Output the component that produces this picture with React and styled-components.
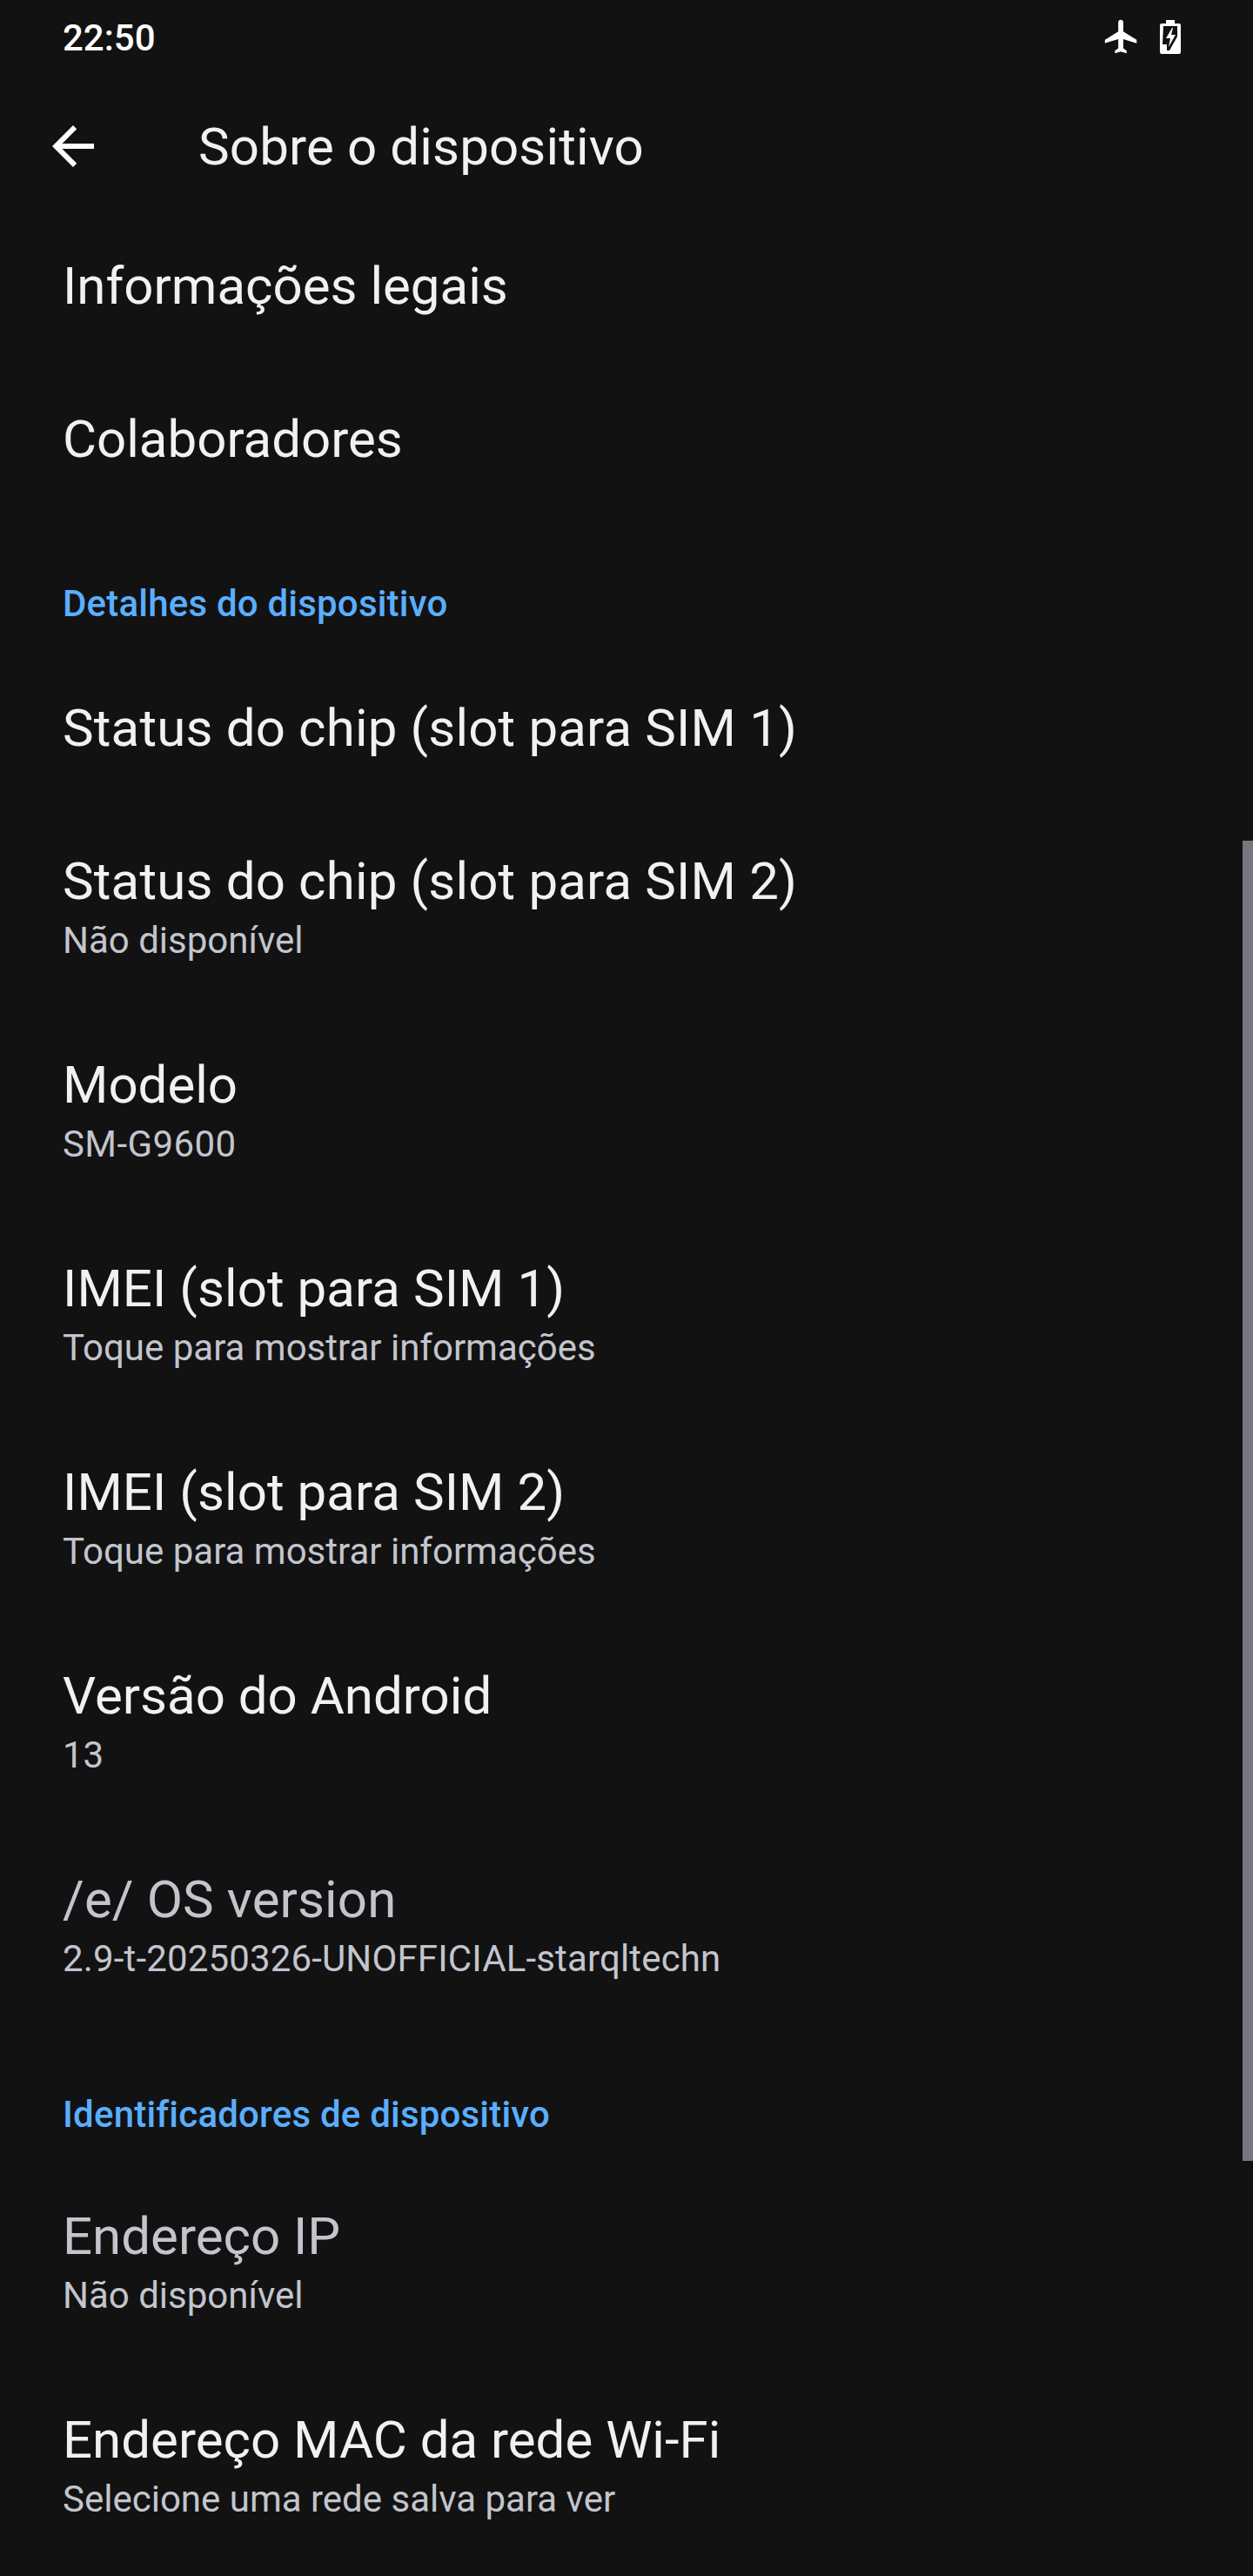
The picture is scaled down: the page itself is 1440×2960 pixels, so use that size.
import React from "react";
import styled, { createGlobalStyle } from "styled-components";

const GlobalStyle = createGlobalStyle`
  html, body {
    margin: 0;
    padding: 0;
    background: #121212;
  }
  body {
    font-family: Roboto, "Liberation Sans", sans-serif;
  }
`;

const sections = [
  {
    items: [{ title: "Informações legais" }, { title: "Colaboradores" }],
  },
  {
    header: "Detalhes do dispositivo",
    items: [
      { title: "Status do chip (slot para SIM 1)", track: 0.17 },
      { title: "Status do chip (slot para SIM 2)", track: 0.17, sub: "Não disponível" },
      { title: "Modelo", sub: "SM-G9600", subTrack: 0.4 },
      { title: "IMEI (slot para SIM 1)", track: 0.07, sub: "Toque para mostrar informações" },
      { title: "IMEI (slot para SIM 2)", track: 0.07, sub: "Toque para mostrar informações" },
      { title: "Versão do Android", sub: "13" },
      {
        title: "/e/ OS version",
        track: 0.12,
        sub: "2.9-t-20250326-UNOFFICIAL-starqltechn",
        subTrack: 0.15,
        muted: true,
      },
    ],
  },
  {
    header: "Identificadores de dispositivo",
    tight: true,
    items: [
      { title: "Endereço IP", sub: "Não disponível", muted: true },
      { title: "Endereço MAC da rede Wi-Fi", sub: "Selecione uma rede salva para ver" },
    ],
  },
];

function AirplaneIcon() {
  return (
    <svg width="46" height="46" viewBox="0 0 24 24" fill="#fff">
      <path d="M21 16v-2l-8-5V3.5c0-.83-.67-1.5-1.5-1.5S10 2.67 10 3.5V9l-8 5v2l8-2.5V19l-2 1.5V22l3.5-1 3.5 1v-1.5L13 19v-5.5l8 2.5z" />
    </svg>
  );
}

function BatteryIcon() {
  return (
    <svg width="24" height="39" viewBox="0 0 24 39">
      <path fill="#fff" d="M7 0h10v4h5a2 2 0 0 1 2 2v31a2 2 0 0 1-2 2H2a2 2 0 0 1-2-2V6a2 2 0 0 1 2-2h5z" />
      <path fill="#121212" d="M4 7h16v12l-9 16H8v-7H3z" />
      <path fill="#fff" d="M14 9 7 21h5l-2 10 8-14h-5l2-8z" />
    </svg>
  );
}

function ArrowBackIcon() {
  return (
    <svg width="72" height="72" viewBox="0 0 24 24" fill="#fff">
      <path d="M20 11H7.830l5.590-5.590L12 4l-8 8 8 8 1.410-1.410L7.830 13H20v-2z" />
    </svg>
  );
}

export default function App() {
  return (
    <>
      <GlobalStyle />
      <Screen>
        <StatusBar>
          <Clock>22:50</Clock>
          <StatusIcons>
            <AirplaneIcon />
            <BatteryIcon />
          </StatusIcons>
        </StatusBar>
        <Toolbar>
          <BackButton>
            <ArrowBackIcon />
          </BackButton>
          <ToolbarTitle>Sobre o dispositivo</ToolbarTitle>
        </Toolbar>
        <List>
          {sections.map((section, i) => (
            <Section key={i}>
              {section.header && <SectionHeader $tight={section.tight}>{section.header}</SectionHeader>}
              {section.items.map((item) => (
                <Row key={item.title}>
                  <RowTitle $muted={item.muted} $track={item.track}>
                    {item.title}
                  </RowTitle>
                  {item.sub && <RowSub $track={item.subTrack}>{item.sub}</RowSub>}
                </Row>
              ))}
            </Section>
          ))}
        </List>
        <ScrollThumb />
      </Screen>
    </>
  );
}

const Screen = styled.div`
  position: relative;
  width: 1440px;
  height: 2960px;
  overflow: hidden;
  background: #121212;
  color: #fff;
`;

const StatusBar = styled.div`
  height: 84px;
  padding: 0 83px 0 72px;
  display: flex;
  align-items: center;
  justify-content: space-between;
  box-sizing: border-box;
`;

const Clock = styled.div`
  padding-top: 4px;
  font-size: 42px;
  font-weight: 500;
  line-height: 84px;
`;

const StatusIcons = styled.div`
  display: flex;
  align-items: center;
  gap: 21px;
`;

const Toolbar = styled.div`
  height: 168px;
  display: flex;
  align-items: center;
`;

const BackButton = styled.div`
  width: 228px;
  padding-left: 48px;
  box-sizing: border-box;
  display: flex;
  align-items: center;
`;

const ToolbarTitle = styled.div`
  font-size: 60px;
  letter-spacing: 0.15px;
  color: #f1f1f3;
`;

const List = styled.div`
  margin-top: -11px;
  display: flex;
  flex-direction: column;
`;

const Section = styled.div`
  display: flex;
  flex-direction: column;
`;

const SectionHeader = styled.div`
  font-size: 42px;
  font-weight: 500;
  line-height: 56px;
  letter-spacing: 0.2px;
  padding: 73px 72px ${(p) => (p.$tight ? "24px" : "27px")};
  color: #5aaeff;
`;

const Row = styled.div`
  padding: 48px 72px;
  display: flex;
  flex-direction: column;
`;

const RowTitle = styled.div`
  font-size: 60px;
  line-height: 80px;
  letter-spacing: ${(p) => p.$track || 0}px;
  color: ${(p) => (p.$muted ? "#c3c5cd" : "#f1f1f3")};
`;

const RowSub = styled.div`
  font-size: 42px;
  line-height: 56px;
  padding-bottom: 2px;
  letter-spacing: ${(p) => p.$track || 0}px;
  color: #c3c5cd;
`;

const ScrollThumb = styled.div`
  position: absolute;
  top: 966px;
  right: 0;
  width: 12px;
  height: 1517px;
  background: #77777f;
`;
